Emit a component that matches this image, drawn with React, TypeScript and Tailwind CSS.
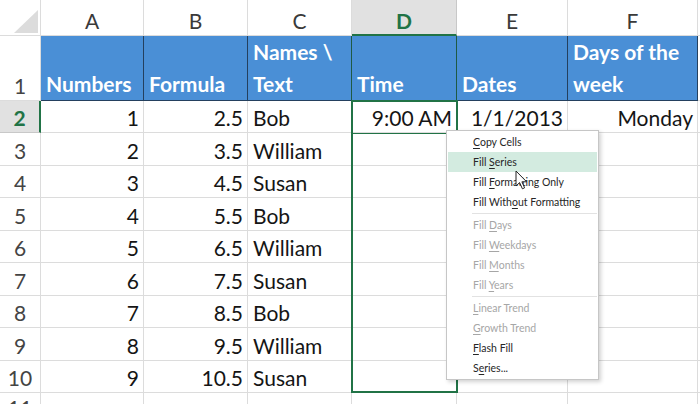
import React from "react";

const LETTERS = ["A", "B", "C", "D", "E", "F", ""];
// column widths, written out so Tailwind picks them up
const W = ["w-[103px]", "w-[104px]", "w-[104px]", "w-[105px]", "w-[111px]", "w-[130px]", "w-[60px]"];

const data: string[][] = [
  ["1", "2.5", "Bob", "9:00 AM", "1/1/2013", "Monday"],
  ["2", "3.5", "William"],
  ["3", "4.5", "Susan"],
  ["4", "5.5", "Bob"],
  ["5", "6.5", "William"],
  ["6", "7.5", "Susan"],
  ["7", "8.5", "Bob"],
  ["8", "9.5", "William"],
  ["9", "10.5", "Susan"],
  [],
];

const rowH = ["h-[32px]", "h-[33px]", "h-[32px]", "h-[33px]", "h-[32px]", "h-[33px]", "h-[32px]", "h-[33px]", "h-[32px]", "h-[30px]"];

const txt = "text-[21px] leading-[24px]";

function ColumnHeader() {
  return (
    <div className="flex h-[36px]">
      <div className="relative w-[41px] shrink-0 border-r border-b border-[#dcdcdc] bg-white">
        <svg width="41" height="36" className="absolute left-0 top-0">
          <polygon points="14,33 38,33 38,10" fill="#dcdcdc" />
        </svg>
      </div>
      {LETTERS.map((l, i) =>
        l === "D" ? (
          <div
            key={i}
            className={`${W[i]} flex shrink-0 items-end justify-center border-r border-b-2 border-r-[#c8c8c8] border-b-[#217346] bg-[#e1e1e1] pb-[1px] ${txt} font-bold text-[#217346]`}
          >
            {l}
          </div>
        ) : (
          <div
            key={i}
            className={`${W[i]} flex shrink-0 items-end justify-center border-r border-b border-[#dcdcdc] bg-white pb-[2px] ${txt} text-[#3a3a3a]`}
          >
            {l}
          </div>
        ),
      )}
    </div>
  );
}

function HeaderRow() {
  const titles = ["Numbers", "Formula", "Names \\ Text", "Time", "Dates", "Days of the week"];
  return (
    <div className="flex h-[65px]">
      <div className={`flex w-[41px] shrink-0 items-end justify-center border-r border-b border-[#dcdcdc] bg-white pb-[2px] ${txt} text-[#444]`}>
        1
      </div>
      {titles.map((t, i) => (
        <div
          key={t}
          className={`${W[i]} flex shrink-0 items-end border-r border-b border-b-[#24405e] bg-[#4a8fd6] pr-[4px] pl-[5px] text-[21px] leading-[32px] font-bold text-white ${
            i === 2 || i === 3 ? "border-r-[#1f5a44]" : "border-r-[#24405e]"
          }`}
        >
          <span className="block">{t}</span>
        </div>
      ))}
      <div className="w-[60px] shrink-0 border-r border-b border-[#dcdcdc] bg-white" />
    </div>
  );
}

function DataRow({ row, n, h }: { row: string[]; n: number; h: string }) {
  const cell = `flex shrink-0 items-end border-r border-b border-[#dcdcdc] pb-[2px] ${txt} text-[#151515]`;
  return (
    <div className={`flex ${h}`}>
      {n === 2 ? (
        <div className={`flex w-[41px] shrink-0 items-end justify-center border-r-2 border-b border-r-[#217346] border-b-[#c8c8c8] bg-[#e1e1e1] pb-[2px] ${txt} font-bold text-[#217346]`}>
          {n}
        </div>
      ) : (
        <div className={`flex w-[41px] shrink-0 items-end justify-center border-r border-b border-[#dcdcdc] bg-white pb-[2px] ${txt} text-[#444]`}>
          {n}
        </div>
      )}
      <div className={`${cell} ${W[0]} justify-end pr-[4px]`}>{row[0]}</div>
      <div className={`${cell} ${W[1]} justify-end pr-[4px]`}>{row[1]}</div>
      <div className={`${cell} ${W[2]} pl-[5px]`}>{row[2]}</div>
      <div className={`${cell} ${W[3]} justify-end pr-[4px]`}>{row[3]}</div>
      <div className={`${cell} ${W[4]} justify-end pr-[4px]`}>{row[4]}</div>
      <div className={`${cell} ${W[5]} justify-end pr-[4px]`}>{row[5]}</div>
      <div className={`${cell} ${W[6]}`} />
    </div>
  );
}

function Item({
  pre,
  k,
  post,
  disabled,
  active,
}: {
  pre: string;
  k: string;
  post: string;
  disabled?: boolean;
  active?: boolean;
}) {
  return (
    <div
      className={`mx-[1px] h-[20px] pl-[25px] text-[10.5px] leading-[20px] whitespace-pre ${
        disabled ? "text-[#a6a6a6]" : "text-[#262626]"
      } ${active ? "bg-[#d3ebe0]" : ""}`}
    >
      {pre}
      <span className="underline underline-offset-[2px]">{k}</span>
      {post}
    </div>
  );
}

function Sep() {
  return (
    <div className="flex h-[3px] items-center pr-[1px] pl-[25px]">
      <div className="h-px w-full bg-[#e2e2e2]" />
    </div>
  );
}

function FillMenu() {
  return (
    <div className="absolute top-[130px] left-[446px] w-[153px] border border-[#c6c6c6] bg-white py-[1px] font-['Lato','Open_Sans',sans-serif] shadow-[2px_2px_4px_rgba(0,0,0,0.18)]">
      <Item pre="" k="C" post="opy Cells" />
      <Item pre="Fill " k="S" post="eries" active />
      <Item pre="Fill " k="F" post="ormatting Only" />
      <Item pre="Fill With" k="o" post="ut Formatting" />
      <Sep />
      <Item pre="Fill " k="D" post="ays" disabled />
      <Item pre="Fill " k="W" post="eekdays" disabled />
      <Item pre="Fill " k="M" post="onths" disabled />
      <Item pre="Fill " k="Y" post="ears" disabled />
      <Sep />
      <Item pre="" k="L" post="inear Trend" disabled />
      <Item pre="" k="G" post="rowth Trend" disabled />
      <Item pre="" k="F" post="lash Fill" />
      <Item pre="S" k="e" post="ries..." />
    </div>
  );
}

function Cursor() {
  return (
    <svg width="14" height="21" viewBox="0 0 14 21" className="absolute top-[170px] left-[515px]">
      <path
        d="M1 1 L1 16 L4.6 12.6 L7.4 18.8 L9.6 17.8 L6.9 11.8 L11.6 11.8 Z"
        fill="#fff"
        stroke="#222"
        strokeWidth="1"
        strokeLinejoin="round"
      />
    </svg>
  );
}

export default function App() {
  return (
    <div className="relative h-[404px] w-[700px] overflow-hidden bg-white font-['Lato','Open_Sans',sans-serif]">
      <ColumnHeader />
      <HeaderRow />
      {data.map((row, i) => (
        <DataRow key={i} row={row} n={i + 2} h={rowH[i]} />
      ))}
      {/* selection range D2:D10 */}
      <div className="absolute top-[100px] left-[351px] h-[293px] w-[107px] border-2 border-[#217346]" />
      <div className="absolute top-[133px] left-[351px] h-px w-[107px] bg-[#217346]" />
      <FillMenu />
      <Cursor />
    </div>
  );
}
